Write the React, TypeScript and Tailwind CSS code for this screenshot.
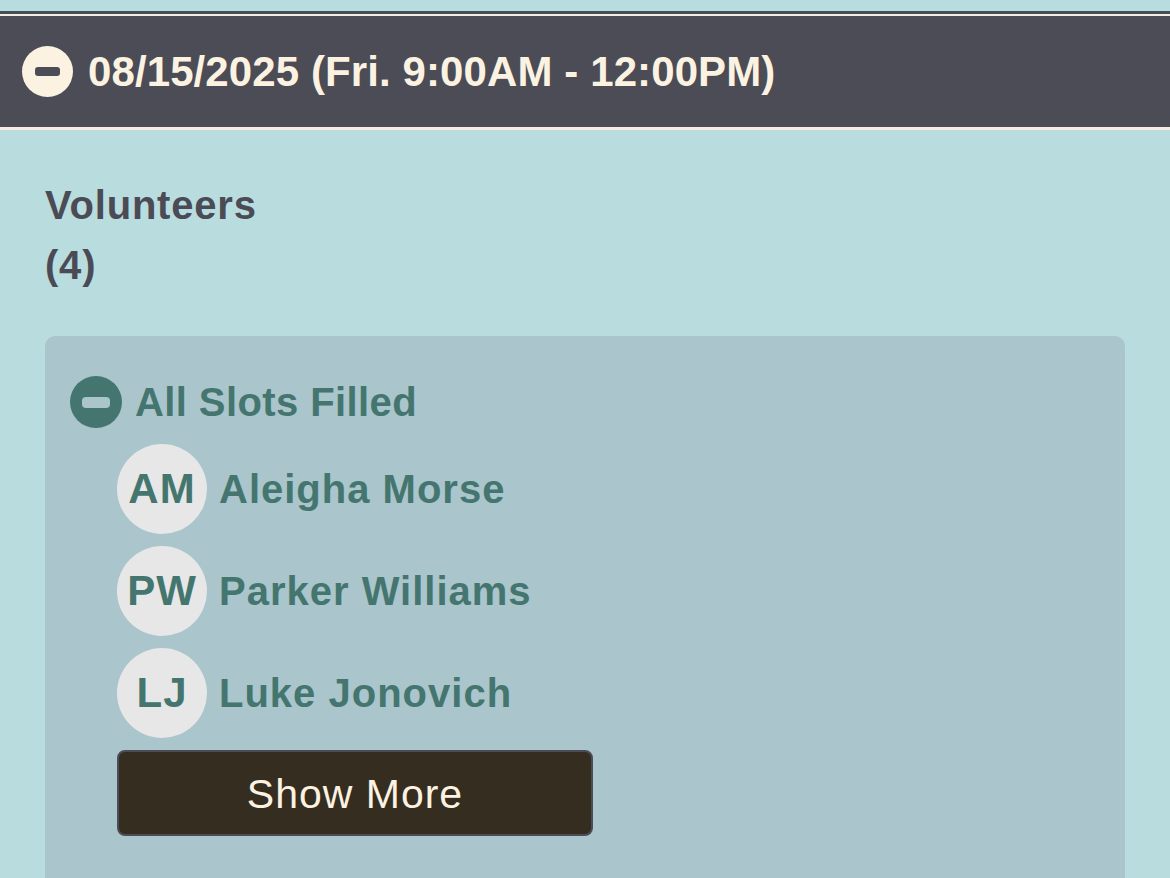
import React from "react";

const font = { fontFamily: '"Liberation Sans", Arial, Helvetica, sans-serif' };

function Avatar({ initials, name }: { initials: string; name: string }) {
  return (
    <div className="flex items-center gap-[12px]">
      <div className="w-[90px] h-[90px] rounded-full bg-[#e7e7e7] flex items-center justify-center text-[42px] font-bold text-[#44766f] leading-none tracking-[1px]">
        {initials}
      </div>
      <div className="text-[40px] font-bold text-[#44766f] leading-none tracking-[1px]">{name}</div>
    </div>
  );
}

export default function App() {
  return (
    <div className="w-[1170px] h-[878px] overflow-hidden bg-[#b9dcdf]" style={font}>
      <div className="h-[11px] bg-[#b9dcdf]" />
      <div className="h-[3px] bg-[#3f5059]" />
      <div className="h-[2px] bg-[#f6eddd]" />
      <div className="h-[111px] bg-[#4b4c55] flex items-center pl-[22px] gap-[15px]">
        <div className="w-[51px] h-[51px] rounded-full bg-[#fcf2e1] flex items-center justify-center">
          <div className="w-[25px] h-[9px] rounded-[3px] bg-[#4b4c55]" />
        </div>
        <div className="text-[42px] font-bold text-[#fcf2e1] leading-none tracking-[0.1px]">
          08/15/2025 (Fri. 9:00AM - 12:00PM)
        </div>
      </div>
      <div className="h-[3px] bg-[#f6eddd]" />
      <div className="px-[45px] pt-[45px]">
        <div className="text-[40px] font-bold text-[#4a4b55] leading-[60px] tracking-[0.8px]">
          Volunteers
          <br />
          (4)
        </div>
        <div className="mt-[41px] rounded-[10px] bg-[#aac5cb] pl-[25px] pt-[40px] pb-[40px] h-[600px]">
          <div className="flex items-center gap-[13px]">
            <div className="w-[52px] h-[52px] rounded-full bg-[#44766f] flex items-center justify-center">
              <div className="w-[28px] h-[11px] rounded-[4px] bg-[#aac5cb]" />
            </div>
            <div className="text-[40px] font-bold text-[#44766f] leading-none tracking-[0.4px]">All Slots Filled</div>
          </div>
          <div className="pl-[47px] mt-[16px] flex flex-col gap-[12px]">
            <Avatar initials="AM" name="Aleigha Morse" />
            <Avatar initials="PW" name="Parker Williams" />
            <Avatar initials="LJ" name="Luke Jonovich" />
            <button className="w-[476px] h-[86px] rounded-[8px] bg-[#352d1f] border-2 border-[#4b4c55] text-[#fcf2e1] text-[41px] leading-none tracking-[1px] flex items-center justify-center pt-[3px]">
              Show More
            </button>
          </div>
        </div>
      </div>
    </div>
  );
}
